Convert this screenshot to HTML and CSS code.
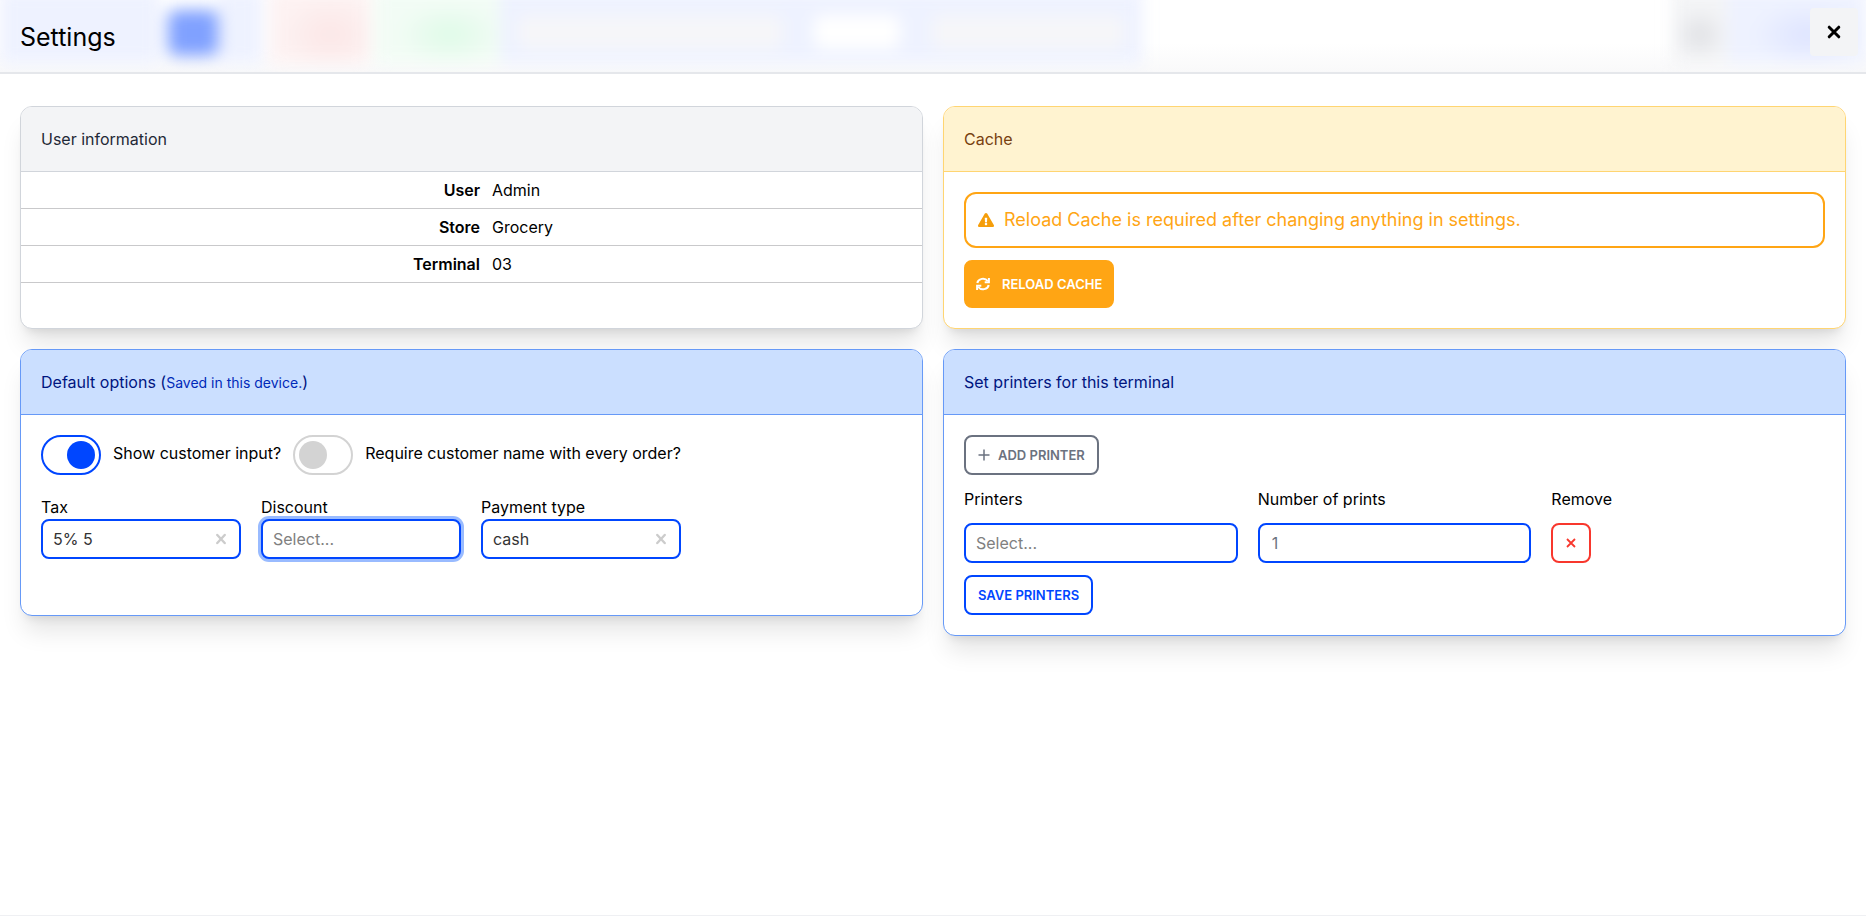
FILE: index.html
```html
<!DOCTYPE html>
<html lang="en">
<head>
<meta charset="utf-8">
<meta name="viewport" content="width=device-width, initial-scale=1">
<title>Settings</title>
<link rel="stylesheet" href="styles.css">
</head>
<body>
<div class="modal">
  <header class="modal-header">
    <div class="backdrop" aria-hidden="true">
      <span class="blob blob-nav"></span>
      <span class="blob blob-active"></span>
      <span class="blob blob-next"></span>
      <span class="blob blob-red"></span>
      <span class="blob blob-green"></span>
      <span class="blob blob-fields"><i class="field-long"></i><i class="field-white"></i><i class="field-short"></i></span>
      <span class="blob blob-grey"></span>
      <span class="blob blob-user"></span>
    </div>
    <h1 class="modal-title">Settings</h1>
    <button class="close" type="button" aria-label="Close">
      <svg width="14" height="14" viewBox="0 0 14 14" fill="none" stroke="currentColor" stroke-width="3" stroke-linecap="round"><path d="M2.2 2.2l9.6 9.6M11.8 2.2l-9.6 9.6"/></svg>
    </button>
  </header>

  <main class="grid">
    <section class="card card-grey">
      <h2 class="card-header">User information</h2>
      <table class="info">
        <tr><th scope="row">User</th><td>Admin</td></tr>
        <tr><th scope="row">Store</th><td>Grocery</td></tr>
        <tr><th scope="row">Terminal</th><td>03</td></tr>
      </table>
    </section>

    <section class="card card-yellow">
      <h2 class="card-header">Cache</h2>
      <div class="card-body">
        <div class="alert" role="alert">
          <svg width="16" height="16" viewBox="0 0 576 512" fill="#f59e0b"><path d="M569.5 440c18.500 32-4.700 72-41.600 72H48.100c-36.900 0-60-40.100-41.600-72L246.400 24c18.500-32 64.700-32 83.200 0l239.900 416zM288 354c-25.400 0-46 20.600-46 46s20.600 46 46 46 46-20.600 46-46-20.600-46-46-46zm-43.700-165.300l7.400 136c.4 6.400 5.600 11.300 12 11.300h48.500c6.400 0 11.600-5 12-11.300l7.400-136c.4-6.900-5.100-12.700-12-12.700h-63.400c-6.900 0-12.400 5.800-11.900 12.700z"/></svg>
          <span>Reload Cache is required after changing anything in settings.</span>
        </div>
        <button class="btn btn-warning" type="button">
          <svg width="14" height="14" viewBox="0 0 14 14" fill="none" stroke="currentColor" stroke-width="2"><path d="M1.300 6A5.700 5 0 0 1 11.700 4M12.700 8A5.700 5 0 0 1 2.300 10"/><path d="M12.900 1v4.200H8.700M1.100 13V8.800h4.200"/></svg>
          RELOAD CACHE
        </button>
      </div>
    </section>

    <section class="card card-blue">
      <h2 class="card-header">Default options (<small>Saved in this device.</small>)</h2>
      <div class="card-body options">
        <div class="toggles">
          <input class="toggle" id="show-customer" type="checkbox" checked>
          <label for="show-customer">Show customer input?</label>
          <input class="toggle" id="require-name" type="checkbox">
          <label for="require-name">Require customer name with every order?</label>
        </div>
        <div class="fields">
          <div class="field">
            <label for="tax">Tax</label>
            <div class="control">
              <select id="tax"><option>5% 5</option></select>
              <button class="clear" type="button" aria-label="Clear tax"><svg width="10" height="12" viewBox="0 0 10 12" fill="none" stroke="currentColor" stroke-width="2.400" stroke-linecap="round"><path d="M1.300 2l7.400 8M8.700 2l-7.400 8"/></svg></button>
            </div>
          </div>
          <div class="field">
            <label for="discount">Discount</label>
            <div class="control control-focus">
              <select id="discount" class="empty"><option>Select...</option></select>
            </div>
          </div>
          <div class="field">
            <label for="payment">Payment type</label>
            <div class="control">
              <select id="payment"><option>cash</option></select>
              <button class="clear" type="button" aria-label="Clear payment type"><svg width="10" height="12" viewBox="0 0 10 12" fill="none" stroke="currentColor" stroke-width="2.400" stroke-linecap="round"><path d="M1.300 2l7.400 8M8.700 2l-7.400 8"/></svg></button>
            </div>
          </div>
        </div>
      </div>
    </section>

    <section class="card card-blue">
      <h2 class="card-header">Set printers for this terminal</h2>
      <div class="card-body">
        <button class="btn btn-outline" type="button">
          <svg width="12" height="12" viewBox="0 0 12 12" fill="none" stroke="currentColor" stroke-width="1.500"><path d="M6 0.500v11M0.500 6h11"/></svg>
          ADD PRINTER
        </button>
        <div class="printers">
          <label for="printer">Printers</label>
          <label for="prints">Number of prints</label>
          <span>Remove</span>
          <div class="control"><select id="printer" class="empty"><option>Select...</option></select></div>
          <div class="control"><input id="prints" type="text" inputmode="numeric" placeholder="1"></div>
          <button class="btn btn-danger" type="button" aria-label="Remove printer">
            <svg width="10" height="10" viewBox="0 0 10 10" fill="none" stroke="currentColor" stroke-width="1.800"><path d="M1 1l8 8M9 1L1 9"/></svg>
          </button>
        </div>
        <button class="btn btn-primary" type="button">SAVE PRINTERS</button>
      </div>
    </section>
  </main>
</div>
</body>
</html>
```
FILE: styles.css
```css
*, *::before, *::after { box-sizing: border-box; }

body {
  margin: 0;
  background: #fff;
  color: #000;
  font: 16px/24px Inter, "Liberation Sans", sans-serif;
}

button, input, select { font: inherit; color: inherit; margin: 0; }
button { cursor: pointer; }
svg { display: block; flex: none; }

.modal {
  min-height: 100vh;
  border-bottom: 1px solid #eff0f3;
}

.modal-header {
  position: relative;
  display: flex;
  justify-content: space-between;
  align-items: flex-start;
  height: 74px;
  padding: 8px 8px 0 20px;
  border-bottom: 2px solid #e5e7eb;
  overflow: hidden;
  background: linear-gradient(#fff 60%, #f9f9fa);
}

.modal-title {
  position: relative;
  margin: 12px 0 0;
  font-size: 25px;
  line-height: 34px;
  font-weight: 400;
}

.close {
  position: relative;
  display: grid;
  place-items: center;
  width: 48px;
  height: 48px;
  padding: 0;
  border: 0;
  border-radius: 4px;
  background: #f3f4f6;
}

/* Blurred toolbar showing through the header */
.backdrop {
  position: absolute;
  inset: -10px 0 8px;
  display: flex;
  filter: blur(8px);
}
.blob { flex: none; background: #eef2ff; }
.blob-nav { width: 160px; margin-right: 8px; }
.blob-active { width: 50px; margin: 20px 0 8px; border-radius: 8px; background: #80a1ff; }
.blob-next { width: 44px; }
.blob-red { width: 100px; margin-left: 8px; background: radial-gradient(ellipse at 60% 60%, #fbe6e6, #fdf2f2 60%); }
.blob-green { width: 126px; margin-left: 4px; background: radial-gradient(ellipse at 60% 60%, #defae7, #f2fcf5 50%); }
.blob-fields { display: flex; align-items: center; width: 642px; padding: 10px 18px 0; gap: 32px; }
.blob-fields i { height: 34px; border-radius: 8px; background: #f6f6f9; }
.field-long { width: 264px; }
.blob-fields .field-white { width: 86px; background: #fff; }
.field-short { flex: 1; }
.blob-grey { width: 56px; margin-left: auto; background: radial-gradient(circle at 50% 60%, #dedfe3, #f3f4f6 50%); }
.blob-user { width: 138px; background: radial-gradient(ellipse at 58% 60%, #dde3ff, #eef2ff 50%); }

.grid {
  display: grid;
  grid-template-columns: 1fr 1fr;
  align-items: start;
  gap: 20px;
  padding: 32px 20px;
}

.card {
  align-self: start;
  border: 1px solid;
  border-radius: 12px;
  overflow: hidden;
  background: #fff;
  box-shadow: 0 20px 25px -5px rgb(0 0 0 / 0.1), 0 8px 10px -6px rgb(0 0 0 / 0.1);
}
.card-grey, .card-yellow { align-self: stretch; }
.card-grey { border-color: #d1d5db; }
.card-yellow { border-color: #ffd572; }
.card-blue { border-color: #6699f7; }

.card-header {
  margin: 0;
  padding: 20px;
  border-bottom: 1px solid;
  border-color: inherit;
  font-size: 16px;
  line-height: 24px;
  font-weight: 400;
}
.card-header small { font-size: 14px; line-height: 1; color: #0029b8; }
.card-grey .card-header { background: #f3f4f6; color: #1f2937; }
.card-yellow .card-header { background: #fff3d0; color: #78400f; }
.card-blue .card-header { background: #cbdfff; color: #001580; }

.card-body {
  display: flex;
  flex-direction: column;
  align-items: flex-start;
  gap: 12px;
  padding: 20px;
}

.info { width: 100%; border-collapse: collapse; }
.info th, .info td {
  padding: 6px;
  border-bottom: 1px solid #c9c9cb;
  text-align: left;
}
.info th { width: 465px; text-align: right; font-weight: 600; }

.alert {
  display: flex;
  align-items: center;
  gap: 10px;
  align-self: stretch;
  min-height: 56px;
  padding: 0 12px;
  border: 2px solid #ffa514;
  border-radius: 12px;
  color: #ffa514;
  font-size: 18px;
}

.btn {
  display: flex;
  align-items: center;
  gap: 8px;
  height: 40px;
  padding: 0 12px;
  border: 2px solid;
  border-radius: 8px;
  background: #fff;
  font-size: 13px;
  font-weight: 600;
}
.btn-warning { height: 48px; padding: 0 10px; gap: 12px; border-color: #ffa514; background: #ffa514; color: #fff; }
.btn-outline { color: #6b7280; }
.btn-primary { color: #0046ff; }
.btn-danger { justify-content: center; width: 40px; padding: 0; color: #f8372d; }

.options { gap: 20px; padding-bottom: 56px; }
.toggles { display: flex; align-items: flex-start; flex-wrap: wrap; gap: 12px; }
.toggles label { line-height: 36px; }

.toggle {
  appearance: none;
  width: 60px;
  height: 40px;
  padding: 4px;
  border: 2px solid #d3d3d3;
  border-radius: 20px;
}
.toggle::before {
  content: "";
  display: block;
  width: 28px;
  height: 28px;
  border-radius: 50%;
  background: #d3d3d3;
}
.toggle:checked { border-color: #0046ff; }
.toggle:checked::before { margin-left: auto; background: #0046ff; }

.fields { display: flex; flex-wrap: wrap; gap: 20px; }
.field { width: 200px; }
.field label { display: block; }

.control {
  display: flex;
  align-items: center;
  height: 40px;
  border: 2px solid #0046ff;
  border-radius: 8px;
  background: #fff;
}
.control-focus { box-shadow: 0 0 0 3px #99bbff; }
.control select, .control input {
  appearance: none;
  flex: 1;
  min-width: 0;
  height: 36px;
  padding: 0 10px;
  border: 0;
  outline: 0;
  background: none;
  color: #333;
}
.control input { padding: 0 12px; }
.control .empty { color: #808080; }
.control input::placeholder { color: #6b7280; opacity: 1; }
.clear { padding: 8px 13px; border: 0; background: none; color: #ccc; }

.printers {
  display: grid;
  grid-template-columns: repeat(3, minmax(0, 1fr));
  gap: 12px 20px;
  align-self: stretch;
}
```
